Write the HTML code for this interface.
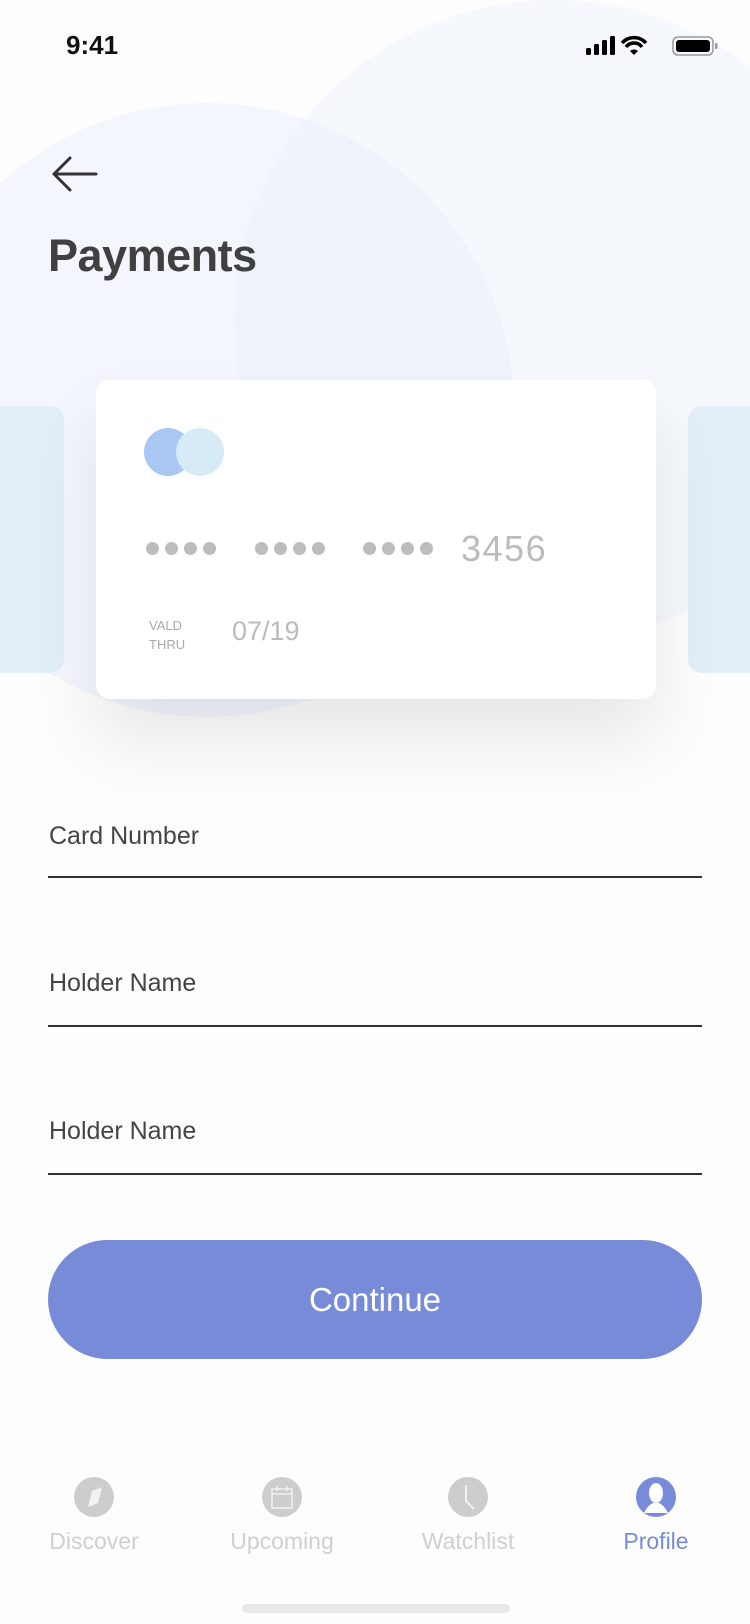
<!DOCTYPE html>
<html><head><meta charset="utf-8"><style>
*{margin:0;padding:0;box-sizing:border-box}
body{width:750px;height:1624px;overflow:hidden;background:#fdfdfd;font-family:"Liberation Sans",sans-serif;position:relative}
.a{position:absolute}
.c{border-radius:50%}
.dot{position:absolute;width:13px;height:13px;border-radius:50%;background:#bdbdbd;top:542px}
.lbl{position:absolute;left:49px;font-size:25px;color:#444}
.line{position:absolute;left:48px;width:654px;height:2px;background:#333}
.tab{position:absolute;top:1477px;width:40px;height:40px;border-radius:50%;background:#cdcdcd}
.tl{position:absolute;top:1528px;font-size:23px;color:#cfcfcf;width:160px;text-align:center}
</style></head><body>
<svg class="a" style="left:0;top:0" width="750" height="760"><defs><clipPath id="k"><circle cx="207" cy="410" r="307"/></clipPath></defs><circle cx="554" cy="320" r="320" fill="#f5f8fd"/><circle cx="207" cy="410" r="307" fill="#f3f6fd"/><circle cx="554" cy="320" r="320" fill="#eef3fc" clip-path="url(#k)"/></svg>
<div class="a" style="left:66px;top:30px;font-size:26px;font-weight:bold;color:#111">9:41</div>
<svg class="a" style="left:586px;top:34px" width="140" height="26"><rect x="0" y="14" width="5" height="7" rx="1.5"/><rect x="8" y="10" width="5" height="11" rx="1.5"/><rect x="16" y="6" width="5" height="15" rx="1.5"/><rect x="24" y="2" width="5" height="19" rx="1.5"/><path d="M36 9 A16 16 0 0 1 60 9 M40 13 A10 10 0 0 1 56 13" stroke="#000" stroke-width="3.5" fill="none"/><path d="M44 17 L48 21 L52 17 A6 6 0 0 0 44 17Z"/><rect x="87" y="3" width="40" height="18" rx="5" fill="none" stroke="#999" stroke-width="1.5"/><rect x="90" y="6" width="34" height="12" rx="3"/><rect x="129" y="9" width="2.5" height="6" rx="1" fill="#999"/></svg>
<svg class="a" style="left:50px;top:154px" width="50" height="40"><path d="M46 20 H5 M20 4 L4 20 L20 36" stroke="#333" stroke-width="3" fill="none" stroke-linecap="round" stroke-linejoin="round"/></svg>
<div class="a" style="left:48px;top:230px;font-size:45px;font-weight:bold;color:#404040;letter-spacing:-0.5px">Payments</div>
<div class="a" style="left:0;top:406px;width:64px;height:267px;border-radius:0 14px 14px 0;background:#e3eff8"></div>
<div class="a" style="left:688px;top:406px;width:70px;height:267px;border-radius:14px 0 0 14px;background:#e3eff8"></div>
<div class="a" style="left:96px;top:380px;width:560px;height:319px;border-radius:14px;background:#fff;box-shadow:0 40px 70px rgba(0,0,0,.09)"></div>
<div class="a c" style="left:144px;top:428px;width:48px;height:48px;background:#a9c7f3"></div>
<div class="a c" style="left:176px;top:428px;width:48px;height:48px;background:#d6ebf5"></div>
<div class="dot" style="left:146px"></div><div class="dot" style="left:165px"></div><div class="dot" style="left:184px"></div><div class="dot" style="left:203px"></div>
<div class="dot" style="left:255px"></div><div class="dot" style="left:274px"></div><div class="dot" style="left:293px"></div><div class="dot" style="left:312px"></div>
<div class="dot" style="left:363px"></div><div class="dot" style="left:382px"></div><div class="dot" style="left:401px"></div><div class="dot" style="left:420px"></div>
<div class="a" style="left:461px;top:528px;font-size:36px;color:#bbb;letter-spacing:1.5px">3456</div>
<div class="a" style="left:149px;top:616px;font-size:13px;color:#aaa;line-height:19px">VALD<br>THRU</div>
<div class="a" style="left:232px;top:616px;font-size:27px;color:#bbb">07/19</div>
<div class="lbl" style="top:822px">Card Number</div><div class="line" style="top:876px"></div>
<div class="lbl" style="top:969px">Holder Name</div><div class="line" style="top:1025px"></div>
<div class="lbl" style="top:1117px">Holder Name</div><div class="line" style="top:1173px"></div>
<div class="a" style="left:48px;top:1240px;width:654px;height:119px;border-radius:60px;background:#788bd8;color:#fff;font-size:33px;text-align:center;line-height:119px">Continue</div>
<div class="tab" style="left:74px"></div><svg class="a" style="left:74px;top:1477px" width="40" height="40"><path d="M14 30 L18 14 L28 10 L24 26Z" fill="#f2f2f2"/></svg>
<div class="tab" style="left:262px"></div><svg class="a" style="left:262px;top:1477px" width="40" height="40"><rect x="10" y="12" width="20" height="19" fill="none" stroke="#f2f2f2" stroke-width="1.5"/><path d="M10 17H30M15 9V14M25 9V14" stroke="#f2f2f2" stroke-width="1.5"/></svg>
<div class="tab" style="left:448px"></div><svg class="a" style="left:448px;top:1477px" width="40" height="40"><path d="M18 8V24L26 32" stroke="#f2f2f2" stroke-width="2" fill="none"/></svg>
<div class="tab" style="left:636px;background:#788bd8"></div><svg class="a" style="left:636px;top:1477px" width="40" height="40"><ellipse cx="20" cy="16" rx="7" ry="10" fill="#fff"/><path d="M8 36 Q12 28 17 26 H23 Q28 28 32 36Z" fill="#fff"/></svg>
<div class="tl" style="left:14px">Discover</div>
<div class="tl" style="left:202px">Upcoming</div>
<div class="tl" style="left:388px">Watchlist</div>
<div class="tl" style="left:576px;color:#788bd8">Profile</div>
<div class="a" style="left:242px;top:1604px;width:268px;height:9px;border-radius:5px;background:#e8e8ea"></div>
</body></html>
